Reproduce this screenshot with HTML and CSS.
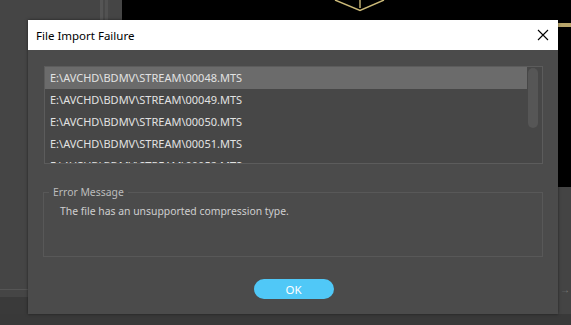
FILE: index.html
```html
<!DOCTYPE html>
<html>
<head>
<meta charset="utf-8">
<link rel="stylesheet" href="styles.css">
</head>
<body>
<div class="desk">
  <div class="app-left"></div>
  <div class="app-strip"></div>
  <div class="app-black">
    <svg class="gold" width="60" height="12" viewBox="0 0 60 12"><path d="M2 0 L27 10.5 L51 0 M27 0 V8" fill="none" stroke="#cbb978" stroke-width="1.4"/></svg>
    <div class="gold-bar"></div>
  </div>
  <div class="app-right"><span class="arrow">→</span></div>
  <div class="app-leftline"></div>
  <div class="app-bottom"></div>

  <div class="dialog">
    <div class="titlebar">
      <span class="title">File Import Failure</span>
      <svg class="close" width="12" height="12" viewBox="0 0 12 12"><path d="M1 1 L11 11 M11 1 L1 11" stroke="#000" stroke-width="1.1"/></svg>
    </div>
    <div class="body">
      <div class="list">
        <div class="rows">
          <div class="row sel">E:\AVCHD\BDMV\STREAM\00048.MTS</div>
          <div class="row">E:\AVCHD\BDMV\STREAM\00049.MTS</div>
          <div class="row">E:\AVCHD\BDMV\STREAM\00050.MTS</div>
          <div class="row">E:\AVCHD\BDMV\STREAM\00051.MTS</div>
          <div class="row">E:\AVCHD\BDMV\STREAM\00052.MTS</div>
        </div>
        <div class="scroll"><div class="thumb"></div></div>
      </div>
      <fieldset class="group">
        <legend>Error Message</legend>
        <div class="msg">The file has an unsupported compression type.</div>
      </fieldset>
      <div class="actions"><button class="ok">OK</button></div>
    </div>
  </div>
</div>
</body>
</html>
```
FILE: styles.css
```css
html, body { margin: 0; padding: 0; }
body { width: 571px; height: 325px; overflow: hidden; background: #3a3a3a; font-family: "Noto Sans", "Open Sans", sans-serif; }
.desk { position: relative; width: 571px; height: 325px; }
.app-left { position: absolute; left: 0; top: 0; width: 122px; height: 297px; background: #454545; }
.app-strip { position: absolute; left: 100px; top: 0; width: 10px; height: 20px; background: linear-gradient(90deg, #555 0 3px, #484848 3px 5px, #525252 5px 8px, #474747 8px); }
.app-black { position: absolute; left: 122px; top: 0; width: 449px; height: 187px; background: #000; }
.gold { position: absolute; left: 211px; top: 0; }
.gold-bar { position: absolute; right: 0; top: 23px; width: 13px; height: 4px; background: #b8a56a; }
.app-right { position: absolute; left: 558px; top: 187px; width: 13px; height: 127px; background: #444; }
.arrow { position: absolute; left: 2px; top: 95px; color: #777; font-size: 10px; }
.app-leftline { position: absolute; left: 0; top: 289px; width: 28px; height: 1px; background: #555; }
.app-bottom { position: absolute; left: 0; top: 314px; width: 571px; height: 11px; background: #393939; }

.dialog { position: absolute; left: 28px; top: 20px; width: 530px; height: 294px; background: #4b4b4b; box-shadow: 0 0 3px rgba(0,0,0,0.5); display: flex; flex-direction: column; }
.titlebar { height: 30px; background: #fff; display: flex; align-items: center; justify-content: space-between; padding: 0 9px 0 8px; }
.title { font-size: 11.5px; color: #000; }
.close { display: block; }
.body { flex: 1; padding: 16px 15px 0 16px; display: flex; flex-direction: column; }
.list { height: 96px; border: 1px solid #5c5c5c; background: #474747; display: flex; overflow: hidden; }
.rows { flex: 1; }
.row { height: 22px; line-height: 22px; padding-left: 5px; font-size: 11px; color: #e2e2e2; white-space: nowrap; }
.row.sel { background: #6b6b6b; }
.scroll { width: 13px; padding: 1px 1px 0 1px; }
.thumb { width: 10px; height: 60px; border-radius: 5px; background: #565656; margin-left: 0; }
.group { margin: 21px 0 0 -1px; padding: 0 0 0 16px; height: 70px; border: 1px solid #585858; }
.group legend { padding: 0 4px; margin-left: -11px; font-size: 10.4px; color: #bcbcbc; }
.msg { font-size: 10.4px; color: #cfcfcf; margin-top: 5px; }
.actions { display: flex; justify-content: center; margin-top: 22px; }
.ok { width: 80px; height: 20px; border: 0; border-radius: 10px; background: #50c8f7; color: #fff; font-family: inherit; font-size: 11.5px; padding: 0; }
```
